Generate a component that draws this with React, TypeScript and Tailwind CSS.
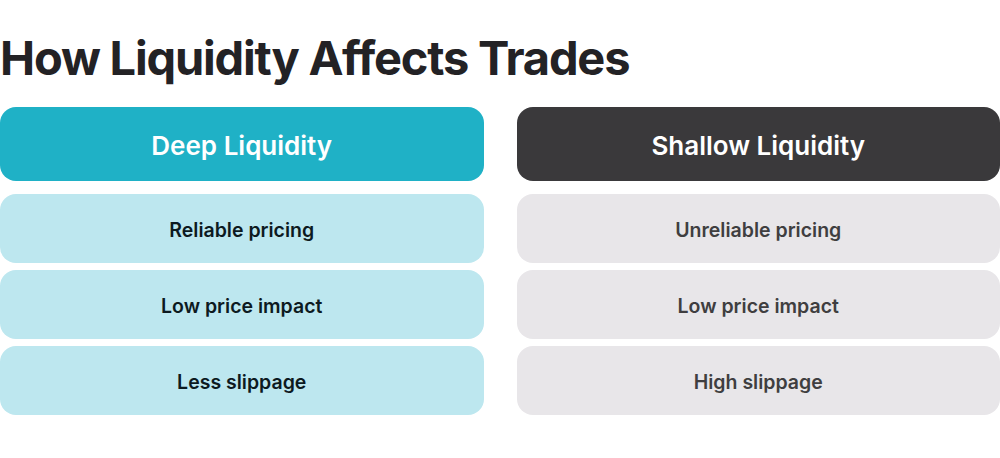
export default function App() {
  const deep = ["Reliable pricing", "Low price impact", "Less slippage"];
  const shallow = ["Unreliable pricing", "Low price impact", "High slippage"];

  return (
    <div className="w-[1000px] h-[458px] bg-white font-['Inter',sans-serif] overflow-hidden">
      <h1 className="pt-[30px] text-[47px] leading-[56px] font-bold tracking-[-1.2px] text-[#232225]">
        How Liquidity Affects Trades
      </h1>
      <div className="mt-[21px] grid grid-cols-2 gap-[33px]">
        <div className="flex flex-col">
          <div className="h-[74px] rounded-[16px] bg-[#1fb1c6] flex items-center justify-center pt-[2px] text-[26px] font-semibold text-white">
            Deep Liquidity
          </div>
          <div className="mt-[13px] flex flex-col gap-[7px]">
            {deep.map((t, i) => (
              <div
                key={i}
                className="h-[69px] rounded-[16px] bg-[#bde7ef] flex items-center justify-center pt-[5px] text-[19.5px] font-semibold text-[#0d1a1f]"
              >
                {t}
              </div>
            ))}
          </div>
        </div>
        <div className="flex flex-col">
          <div className="h-[74px] rounded-[16px] bg-[#3a393b] flex items-center justify-center pt-[2px] text-[26px] font-semibold text-white">
            Shallow Liquidity
          </div>
          <div className="mt-[13px] flex flex-col gap-[7px]">
            {shallow.map((t, i) => (
              <div
                key={i}
                className="h-[69px] rounded-[16px] bg-[#e8e6e9] flex items-center justify-center pt-[5px] text-[19.5px] font-semibold text-[#3f3e40]"
              >
                {t}
              </div>
            ))}
          </div>
        </div>
      </div>
    </div>
  );
}
